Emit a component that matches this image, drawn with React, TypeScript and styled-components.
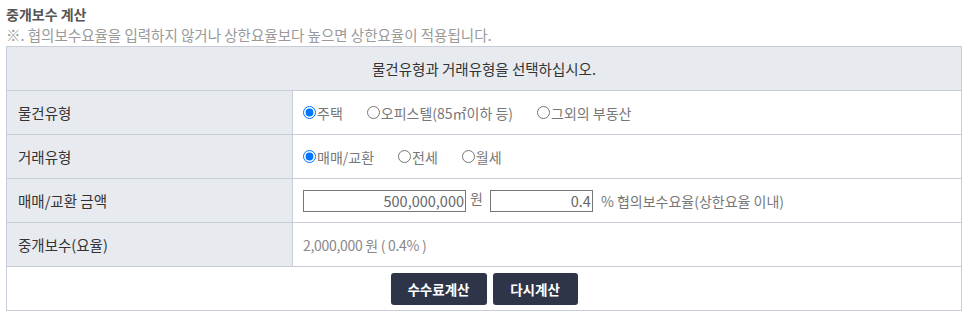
import React from "react";
import styled, { createGlobalStyle } from "styled-components";

const Global = createGlobalStyle`
  html, body { margin: 0; padding: 0; background: #fff; }
  body {
    font-family: "Noto Sans CJK KR", "Noto Sans", sans-serif;
    font-size: 14px;
    color: #333;
  }
`;

const Page = styled.div`
  padding: 4px 6px 0 6px;
  width: 955px;
`;

const Title = styled.h3`
  margin: 0;
  font-size: 14px;
  font-weight: 700;
  color: #555;
  line-height: 20px;
`;

const Note = styled.p`
  margin: 1px 0 0 0;
  font-size: 14.5px;
  color: #999;
  line-height: 20px;
`;

const Table = styled.table`
  width: 956px;
  margin-top: 1px;
  border-collapse: collapse;
  table-layout: fixed;
  border: 1px solid #c8cdd7;
`;

const LabelCol = styled.col`
  width: 286px;
`;

const HeadCell = styled.th`
  height: 44px;
  box-sizing: border-box;
  padding: 0;
  background: #e7eaef;
  font-weight: 400;
  font-size: 14.5px;
  color: #333;
  text-align: center;
  border: 1px solid #c8cdd7;
`;

const Label = styled.th`
  height: 44px;
  box-sizing: border-box;
  padding: 0 0 0 11px;
  background: #e7eaef;
  text-align: left;
  font-weight: 400;
  font-size: 14.5px;
  color: #333;
  border: 1px solid #c8cdd7;
`;

const Cell = styled.td`
  height: 44px;
  box-sizing: border-box;
  padding: 0 0 0 10px;
  color: #666;
  border: 1px solid #c8cdd7;
`;

const ButtonCell = styled.td`
  height: 44px;
  box-sizing: border-box;
  padding: 0;
  text-align: center;
  border: 1px solid #c8cdd7;
`;

const Options = styled.div`
  display: flex;
  align-items: center;
  gap: 24px;
`;

const Option = styled.label`
  display: inline-flex;
  align-items: center;
  color: #777;
  line-height: 20px;
`;

const Radio = styled.input`
  width: 13px;
  height: 13px;
  margin: 0 1px 0 0;
`;

const Inline = styled.div`
  display: flex;
  align-items: center;
  color: #777;
`;

const NumInput = styled.input<{ $w: number }>`
  width: ${(p) => p.$w}px;
  height: 22px;
  box-sizing: border-box;
  border: 1px solid #767676;
  padding: 0 1px;
  text-align: right;
  font-family: inherit;
  font-size: 14.5px;
  color: #666;
  outline: none;
`;

const Unit = styled.span`
  margin: 0 7px 0 4px;
  color: #777;
  position: relative;
  top: -3px;
`;

const Suffix = styled.span`
  margin-left: 8px;
  color: #777;
  white-space: nowrap;
`;

const Result = styled.span`
  color: #888;
  letter-spacing: -0.3px;
`;

const Buttons = styled.div`
  display: flex;
  justify-content: center;
  gap: 6px;
`;

const Button = styled.button<{ $w: number }>`
  width: ${(p) => p.$w}px;
  height: 32px;
  border: 0;
  border-radius: 3px;
  background: #2f3548;
  color: #fff;
  font-family: inherit;
  font-size: 13.5px;
  font-weight: 700;
  cursor: pointer;
`;

export default function App() {
  return (
    <>
      <Global />
      <Page>
        <Title>중개보수 계산</Title>
        <Note>※. 협의보수요율을 입력하지 않거나 상한요율보다 높으면 상한요율이 적용됩니다.</Note>
        <Table>
          <colgroup>
            <LabelCol />
            <col />
          </colgroup>
          <tbody>
            <tr>
              <HeadCell colSpan={2}>물건유형과 거래유형을 선택하십시오.</HeadCell>
            </tr>
            <tr>
              <Label>물건유형</Label>
              <Cell>
                <Options>
                  <Option><Radio type="radio" name="kind" defaultChecked />주택</Option>
                  <Option><Radio type="radio" name="kind" />오피스텔(85㎡이하 등)</Option>
                  <Option><Radio type="radio" name="kind" />그외의 부동산</Option>
                </Options>
              </Cell>
            </tr>
            <tr>
              <Label>거래유형</Label>
              <Cell>
                <Options>
                  <Option><Radio type="radio" name="deal" defaultChecked />매매/교환</Option>
                  <Option><Radio type="radio" name="deal" />전세</Option>
                  <Option><Radio type="radio" name="deal" />월세</Option>
                </Options>
              </Cell>
            </tr>
            <tr>
              <Label>매매/교환 금액</Label>
              <Cell>
                <Inline>
                  <NumInput $w={163} defaultValue="500,000,000" />
                  <Unit>원</Unit>
                  <NumInput $w={103} defaultValue="0.4" />
                  <Suffix>% 협의보수요율(상한요율 이내)</Suffix>
                </Inline>
              </Cell>
            </tr>
            <tr>
              <Label>중개보수(요율)</Label>
              <Cell>
                <Result>2,000,000 원 ( 0.4% )</Result>
              </Cell>
            </tr>
            <tr>
              <ButtonCell colSpan={2}>
                <Buttons>
                  <Button $w={96}>수수료계산</Button>
                  <Button $w={85}>다시계산</Button>
                </Buttons>
              </ButtonCell>
            </tr>
          </tbody>
        </Table>
      </Page>
    </>
  );
}
